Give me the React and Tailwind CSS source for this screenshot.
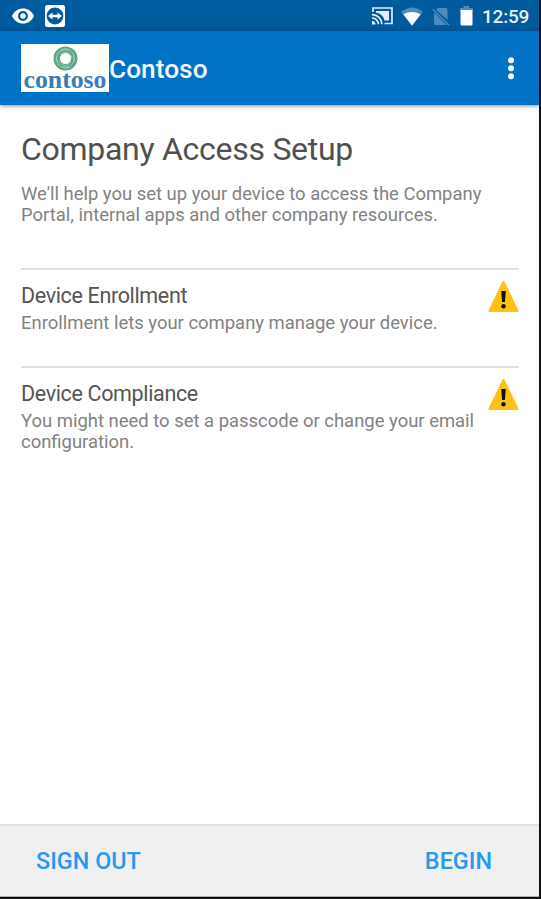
function EyeIcon() {
  return (
    <svg className="ml-[12px] h-[16px] w-[22px]" viewBox="0 0 22 16">
      <path d="M0 8C2.2 3.1 6.200.5 11 .5S19.800 3.100 22 8c-2.200 4.900-6.200 7.500-11 7.500S2.200 12.900 0 8Z" fill="#fff" />
      <circle cx="11" cy="8" r="3.900" fill="#fff" stroke="#005a9e" strokeWidth="2.200" />
    </svg>
  );
}

function RemoteIcon() {
  return (
    <svg className="ml-[11px] h-[22px] w-[20px]" viewBox="0 0 20 22">
      <rect width="20" height="22" rx="2.200" fill="#fff" />
      <circle cx="10" cy="11" r="8.400" fill="#005a9e" />
      <path d="M3 11l4.500-3.600v2.400h5V7.400L17 11l-4.500 3.600v-2.400h-5v2.400Z" fill="#fff" />
    </svg>
  );
}

function CastIcon() {
  return (
    <svg className="h-[18px] w-[21px]" viewBox="0 0 21 18" fill="none" stroke="#e4edf5">
      <path d="M1 5V1h19v15.500h-7.500" strokeWidth="1.700" />
      <path d="M4 4h13v9.500h-4.500C11.500 9 8.500 6.500 4 5.800Z" fill="#e4edf5" stroke="none" />
      <path d="M0 7.600A9.500 9.500 0 0 1 9.800 17.300M0 11a6.300 6.300 0 0 1 6.400 6.300" strokeWidth="1.700" />
      <path d="M0 14a3.500 3.500 0 0 1 3.500 3.500H0Z" fill="#e4edf5" stroke="none" />
    </svg>
  );
}

function WifiIcon() {
  return (
    <svg className="ml-[8px] h-[19px] w-[22px]" viewBox="0 0 22 19">
      <path d="M0 4.800Q11-4 22 4.800L11 19Z" fill="#4c8bbb" />
      <path d="M2.200 7.200Q11 2.800 19.800 7.200L11 18.500Z" fill="#fff" />
    </svg>
  );
}

function NoSimIcon() {
  return (
    <svg className="ml-[9px] h-[19px] w-[18px]" viewBox="0 0 18 19">
      <path d="M5.700 1H14q1.500 0 1.500 1.500V13L4 2.800ZM2 5.500L14.500 18H3.500Q2 18 2 16.500Z" fill="#4c8bbb" />
      <path d="M.8 2.200L17 18.300" stroke="#4c8bbb" strokeWidth="1.500" />
    </svg>
  );
}

function BatteryIcon() {
  return (
    <svg className="ml-[10px] h-[20px] w-[13px]" viewBox="0 0 13 20">
      <path d="M3.500 0h5.500v2H13v3H0V2h3.500Z" fill="#4c8bbb" />
      <path d="M.5 4h12v14.500q0 1-1 1h-10q-1 0-1-1Z" fill="#fff" />
    </svg>
  );
}

function Logo() {
  return (
    <svg className="h-[48px] w-[88px] overflow-visible bg-white" viewBox="0 0 88 48" fill="none">
      <g transform="translate(32 2)">
        <circle cx="12.500" cy="12.500" r="8.800" stroke="#5da386" strokeWidth="6.400" />
        <path d="M4 16C1 8 8 2 15 4M8 4c8-4 15 4 13 11M20 8c4 8-3 15-10 13M17 21C9 25 2 17 4 10M7 9c4-5 11-3 12 3M18 16c-4 5-10 4-12-1" stroke="#a9d0bd" strokeWidth=".9" />
      </g>
      <text x="2.500" y="43.500" textLength="83" lengthAdjust="spacingAndGlyphs" className="font-['Liberation_Serif',serif] text-[26px] font-bold" fill="#397db5">contoso</text>
    </svg>
  );
}

function WarningIcon() {
  return (
    <svg className="mt-[10px] mr-[0.500px] h-[33px] w-[31px] shrink-0" viewBox="0 0 31 33">
      <path d="M15.500 2.200L29.300 30.800H1.700Z" fill="#ffc114" stroke="#ffc114" strokeWidth="2.400" strokeLinejoin="round" />
      <path d="M13.200 11h4.600l-.9 11h-2.800Z" fill="#111" />
      <circle cx="15.500" cy="26.200" r="2.200" fill="#111" />
    </svg>
  );
}

function SetupItem({ title, children, className }) {
  return (
    <section className={`flex justify-between border-t-2 border-[#e0e0e0] ${className}`}>
      <div className="pt-[13px]">
        <h2 className="text-[21.5px] leading-[26px] tracking-[-0.35px] text-[#555] whitespace-nowrap">{title}</h2>
        <p className="mt-[4px] text-[18.45px] leading-[21px] text-[#828282] whitespace-nowrap">{children}</p>
      </div>
      <WarningIcon />
    </section>
  );
}

export default function App() {
  return (
    <div className="h-[899px] w-[541px] border-r-2 border-b-2 border-[#111] bg-white font-['Roboto',sans-serif]">
      <div className="flex h-full flex-col">
        <div className="flex h-[31px] shrink-0 items-center justify-between bg-[#005a9e]">
          <div className="flex items-center"><EyeIcon /><RemoteIcon /></div>
          <div className="flex items-center pt-px pr-[11px]">
            <CastIcon /><WifiIcon /><NoSimIcon /><BatteryIcon />
            <span className="ml-[9px] w-[46px] pt-px text-[19px] leading-[30px] tracking-[-0.2px] font-medium text-[#e8eff6] whitespace-nowrap">12:59</span>
          </div>
        </div>
        <header className="flex h-[74px] shrink-0 items-center bg-[#0072c6] pl-[21px] shadow-[0_1px_4px_rgba(0,0,0,0.45)]">
          <Logo />
          <h1 className="pt-[2px] text-[26.3px] leading-[30px] font-medium text-[#f4f8fc]">Contoso</h1>
          <svg className="mr-[24px] ml-auto h-[24px] w-[8px]" viewBox="0 0 8 24" fill="#fff">
            <circle cx="4" cy="4.300" r="3" /><circle cx="4" cy="12.300" r="3" /><circle cx="4" cy="20.300" r="3" />
          </svg>
        </header>
        <main className="flex-1 pr-[20px] pl-[21px]">
          <h2 className="pt-[24px] text-[32px] leading-[40px] tracking-[-0.28px] text-[#505050] whitespace-nowrap">Company Access Setup</h2>
          <p className="mt-[15px] text-[18.45px] leading-[21px] text-[#828282] whitespace-nowrap">
            We'll help you set up your device to access the Company<br />Portal, internal apps and other company resources.
          </p>
          <SetupItem title="Device Enrollment" className="mt-[42px] h-[98px]">Enrollment lets your company manage your device.</SetupItem>
          <SetupItem title="Device Compliance" className="">You might need to set a passcode or change your email<br />configuration.</SetupItem>
        </main>
        <footer className="flex h-[73px] shrink-0 items-center justify-between border-t-2 border-b border-t-[#e0e0e0] border-b-[#aaa] bg-[#f0f0f0] pt-[2px] pr-[47px] pl-[36px] text-[23.4px] font-medium text-[#2b98f0]">
          <button className="whitespace-nowrap">SIGN OUT</button>
          <button className="whitespace-nowrap">BEGIN</button>
        </footer>
      </div>
    </div>
  );
}
